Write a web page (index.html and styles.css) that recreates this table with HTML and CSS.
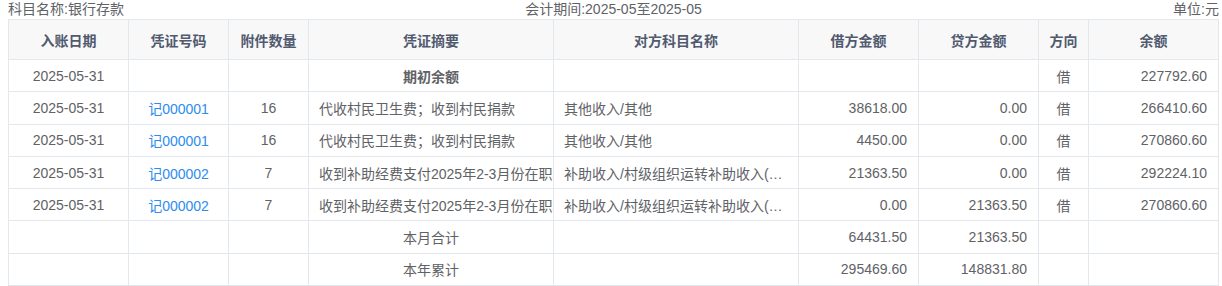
FILE: index.html
```html
<!DOCTYPE html>
<html lang="zh-CN">
<head>
<meta charset="utf-8">
<title>明细账</title>
<link rel="stylesheet" href="styles.css">
</head>
<body>
<div class="page">
  <div class="caption">
    <span class="cap-left">科目名称:银行存款</span>
    <span class="cap-center">会计期间:2025-05至2025-05</span>
    <span class="cap-right">单位:元</span>
  </div>
  <table class="ledger">
    <colgroup>
      <col class="c-date"><col class="c-voucher"><col class="c-att"><col class="c-sum"><col class="c-cp"><col class="c-amt"><col class="c-amt"><col class="c-dir"><col class="c-bal">
    </colgroup>
    <thead>
      <tr>
        <th>入账日期</th><th>凭证号码</th><th>附件数量</th><th>凭证摘要</th><th>对方科目名称</th><th class="pr">借方金额</th><th class="pr">贷方金额</th><th>方向</th><th>余额</th>
      </tr>
    </thead>
    <tbody>
      <tr>
        <td class="center">2025-05-31</td><td></td><td></td><td class="center strong">期初余额</td><td></td><td></td><td></td><td class="center">借</td><td class="right">227792.60</td>
      </tr>
      <tr>
        <td class="center">2025-05-31</td><td class="center"><a class="link">记000001</a></td><td class="center">16</td><td class="left clip">代收村民卫生费；收到村民捐款</td><td class="left ell">其他收入/其他</td><td class="right">38618.00</td><td class="right">0.00</td><td class="center">借</td><td class="right">266410.60</td>
      </tr>
      <tr>
        <td class="center">2025-05-31</td><td class="center"><a class="link">记000001</a></td><td class="center">16</td><td class="left clip">代收村民卫生费；收到村民捐款</td><td class="left ell">其他收入/其他</td><td class="right">4450.00</td><td class="right">0.00</td><td class="center">借</td><td class="right">270860.60</td>
      </tr>
      <tr>
        <td class="center">2025-05-31</td><td class="center"><a class="link">记000002</a></td><td class="center">7</td><td class="left clip">收到补助经费支付2025年2-3月份在职村干部工资</td><td class="left ell">补助收入/村级组织运转补助收入(村干部)</td><td class="right">21363.50</td><td class="right">0.00</td><td class="center">借</td><td class="right">292224.10</td>
      </tr>
      <tr>
        <td class="center">2025-05-31</td><td class="center"><a class="link">记000002</a></td><td class="center">7</td><td class="left clip">收到补助经费支付2025年2-3月份在职村干部工资</td><td class="left ell">补助收入/村级组织运转补助收入(村干部)</td><td class="right">0.00</td><td class="right">21363.50</td><td class="center">借</td><td class="right">270860.60</td>
      </tr>
      <tr>
        <td></td><td></td><td></td><td class="center">本月合计</td><td></td><td class="right">64431.50</td><td class="right">21363.50</td><td></td><td></td>
      </tr>
      <tr>
        <td></td><td></td><td></td><td class="center">本年累计</td><td></td><td class="right">295469.60</td><td class="right">148831.80</td><td></td><td></td>
      </tr>
    </tbody>
  </table>
</div>
</body>
</html>
```

FILE: styles.css
```css
html, body {
  margin: 0;
  padding: 0;
  background: #ffffff;
}

body {
  font-family: "Liberation Sans", "Noto Sans CJK SC", sans-serif;
  font-size: 14px;
  color: #606266;
}

.page {
  padding: 0 3px 0 8px;
}

.caption {
  display: grid;
  grid-template-columns: 1fr auto 1fr;
  height: 19px;
  line-height: 18px;
  font-size: 14px;
  color: #606266;
}

.cap-left { justify-self: start; }
.cap-center { justify-self: center; }
.cap-right { justify-self: end; }

.ledger {
  width: 100%;
  table-layout: fixed;
  border-collapse: collapse;
  border: 1px solid #e3e8ee;
}

.c-date { width: 120px; }
.c-voucher { width: 100px; }
.c-att { width: 80px; }
.c-sum { width: 245px; }
.c-cp { width: 245px; }
.c-amt { width: 120px; }
.c-dir { width: 50px; }
.c-bal { width: auto; }

.ledger th,
.ledger td {
  border: 1px solid #e3e8ee;
  padding: 0 10px;
  white-space: nowrap;
  overflow: hidden;
  vertical-align: middle;
}

.ledger th {
  height: 39px;
  background: #f8f8f9;
  font-weight: bold;
  text-align: center;
  color: #515a6e;
}

.ledger th.pr {
  padding-right: 10px;
}

.ledger td {
  height: 31.3px;
  color: #606266;
}

.center { text-align: center; }
.left { text-align: left; }
.right { text-align: right; }
.ledger td.right { padding-right: 11px; }

.strong {
  font-weight: bold;
  color: #17181a;
}

.clip { text-overflow: clip; }
.ell { text-overflow: ellipsis; }

.link {
  color: #2d8cf0;
  text-decoration: none;
  cursor: pointer;
}
```
